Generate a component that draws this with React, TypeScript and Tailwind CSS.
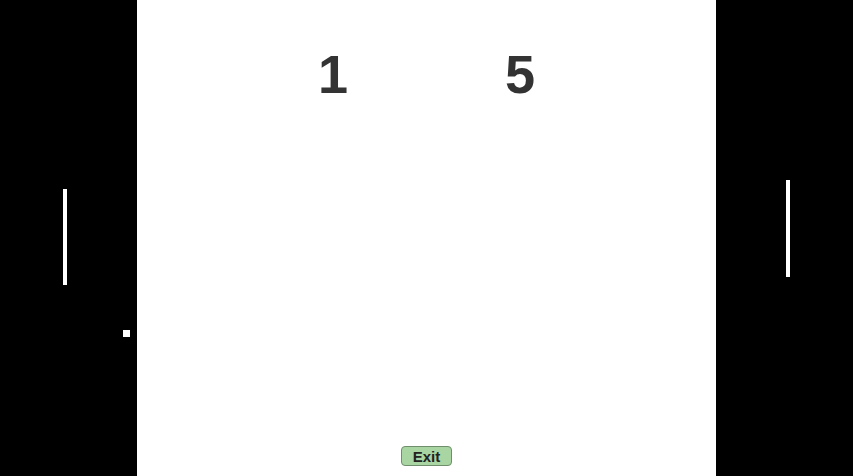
import React from "react";

export default function App() {
  return (
    <div className="relative flex h-[476px] w-full overflow-hidden bg-black" style={{ fontFamily: '"Liberation Sans", Arial, sans-serif' }}>
      <div className="relative w-[137px] shrink-0 bg-black">
        <div className="absolute left-[63px] top-[189px] h-[96px] w-[4px] bg-white" />
        <div className="absolute left-[123px] top-[330px] h-[7px] w-[7px] bg-white" />
      </div>
      <div className="flex flex-1 flex-col items-center bg-white">
        <div className="mt-[47px] flex gap-[127px] text-[54px] font-bold leading-none text-[#333333]">
          <span className="w-[60px] text-center">1</span>
          <span className="w-[60px] text-center">5</span>
        </div>
        <div className="flex-1" />
        <button className="mb-[10px] flex h-[20px] w-[51px] items-center justify-center rounded-[4px] border border-[#6f8f6c] bg-[#a8d5a2] text-[15px] font-bold leading-none text-[#222222]">
          Exit
        </button>
      </div>
      <div className="relative w-[137px] shrink-0 bg-black">
        <div className="absolute left-[70px] top-[180px] h-[97px] w-[4px] bg-white" />
      </div>
    </div>
  );
}
